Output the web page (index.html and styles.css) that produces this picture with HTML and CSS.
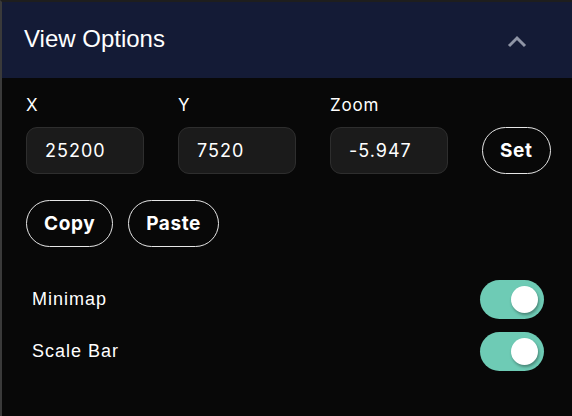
FILE: index.html
```html
<!DOCTYPE html>
<html lang="en">
<head>
<meta charset="UTF-8">
<meta name="viewport" content="width=device-width, initial-scale=1.0">
<title>View Options</title>
<link rel="stylesheet" href="styles.css">
</head>
<body>
    <div class="panel">
        <div class="panel-header">
            <h2>View Options</h2>
            <svg class="chevron" width="22" height="14" viewBox="0 0 22 14">
                <path d="M3 11 L11 3 L19 11" fill="none" stroke="#8f95a6" stroke-width="3"/>
            </svg>
        </div>
        <div class="panel-body">
            <div class="coords">
                <div class="field">
                    <label for="x">X</label>
                    <input type="text" id="x" value="25200">
                </div>
                <div class="field">
                    <label for="y">Y</label>
                    <input type="text" id="y" value="7520">
                </div>
                <div class="field">
                    <label for="zoom">Zoom</label>
                    <input type="text" id="zoom" value="-5.947">
                </div>
                <button class="pill">Set</button>
            </div>
            <div class="actions">
                <button class="pill">Copy</button>
                <button class="pill">Paste</button>
            </div>
            <div class="toggle-row">
                <span>Minimap</span>
                <label class="switch"><input type="checkbox" checked><span class="slider"></span></label>
            </div>
            <div class="toggle-row">
                <span>Scale Bar</span>
                <label class="switch"><input type="checkbox" checked><span class="slider"></span></label>
            </div>
        </div>
    </div>
</body>
</html>
```

FILE: styles.css
```css
body {
    margin: 0;
    padding: 0;
    background-color: #080808;
    font-family: "Liberation Sans", Arial, sans-serif;
    color: #fff;
}

.panel {
    height: 414px;
    border-top: 2px solid #1e1e1e;
    border-left: 2px solid #3a3a3a;
}

.panel-header {
    height: 76px;
    background-color: #141b36;
    display: flex;
    align-items: center;
    justify-content: space-between;
    padding: 0 44px 0 22px;
}

.panel-header h2 {
    margin: 0;
    font-size: 24px;
    font-weight: normal;
    padding-bottom: 2px;
}

.chevron {
    margin-top: 4px;
}

.panel-body {
    padding: 17px 28px 0 24px;
}

.coords {
    display: flex;
    align-items: flex-end;
}

.field {
    display: flex;
    flex-direction: column;
    margin-right: 34px;
}

.field label {
    font-family: Inter, sans-serif;
    font-size: 17px;
    letter-spacing: 0.8px;
    margin-bottom: 12px;
}

.field input {
    width: 118px;
    height: 47px;
    box-sizing: border-box;
    background-color: #1b1b1b;
    border: 1px solid #2e2e2e;
    border-radius: 11px;
    color: #fff;
    font-family: Inter, sans-serif;
    font-size: 18px;
    letter-spacing: 1px;
    padding: 0 18px;
    outline: none;
}

.pill {
    background-color: #080808;
    color: #fff;
    border: 1px solid #e6e6e6;
    border-radius: 24px;
    height: 47px;
    padding: 0 17px;
    font-family: Inter, sans-serif;
    font-weight: bold;
    font-size: 19px;
    letter-spacing: 0.6px;
    cursor: pointer;
}

.actions {
    display: flex;
    gap: 15px;
    margin-top: 26px;
    margin-bottom: 33px;
}

.toggle-row {
    display: flex;
    justify-content: space-between;
    align-items: center;
    height: 39px;
    margin-bottom: 13px;
    padding-left: 6px;
    font-size: 18px;
    letter-spacing: 1px;
}

.switch {
    position: relative;
    width: 64px;
    height: 39px;
}

.switch input {
    display: none;
}

.slider {
    position: absolute;
    inset: 0;
    background-color: #6ecbb5;
    border-radius: 20px;
}

.slider::before {
    content: "";
    position: absolute;
    width: 27px;
    height: 27px;
    top: 6px;
    left: 31px;
    background-color: #fff;
    border-radius: 50%;
    box-shadow: 1px 2px 3px rgba(0, 0, 0, 0.35);
}
```
